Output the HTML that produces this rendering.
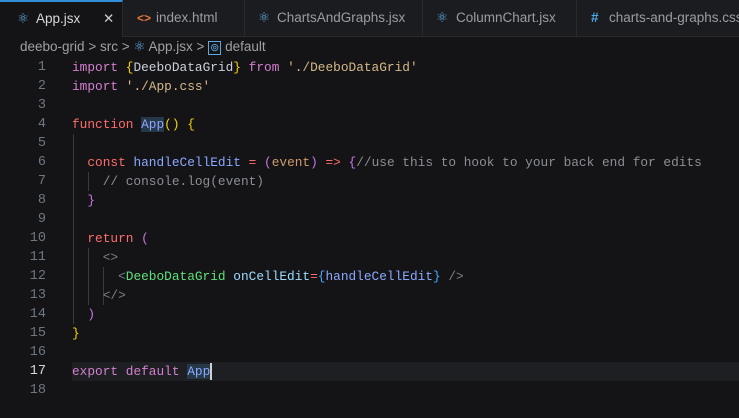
<!DOCTYPE html><html><head><style>
body{margin:0;width:739px;height:418px;background:#141417;overflow:hidden;font-family:"Liberation Sans",sans-serif;position:relative}
.tabs{position:absolute;top:0;left:0;width:739px;height:36px;background:#1b1c1f;border-bottom:1px solid #2a2a2d}
.tab{position:absolute;top:0;height:36px;border-right:1px solid #2a2a2d;color:#9a9da3;font-size:13.5px;line-height:36px;box-sizing:border-box;white-space:nowrap}
.tab.a{background:#141417;color:#d8d8d8;border-top:2px solid #2f8fd8;line-height:33px;height:37px}
.ic{position:absolute;top:0}
.bc{position:absolute;top:36px;left:20px;height:22px;line-height:22px;color:#a0a0a0;font-size:13.5px}
.code{position:absolute;top:58px;left:0;font-family:"Liberation Mono",monospace;font-size:12.8px}
.l{height:19px;line-height:19px;white-space:pre;position:relative}
.n{position:absolute;left:0;width:46px;text-align:right;color:#6e7681;font-size:13.5px}
.t{position:absolute;left:72px;color:#c9d1d9}
.k{color:#d57fd0}.r{color:#ff6b6b}.s{color:#d6b98a}.y{color:#f5d400}.p{color:#c675e8}.b{color:#4aa8ff}.f{color:#8aa8ff}
.c{color:#8b8e94}.g{color:#5fe07a}.v{color:#9cdcfe}.o{color:#cf9a6a}.gt{color:#7b7f86}
.hl{background:#263748}
.guide{position:absolute;width:1px;background:#3a3a3d}
</style></head><body>
<div class="tabs">
<div class="tab a" style="left:0;width:123px"><span class="ic" style="left:17px;color:#5fa8e0">⚛</span><span style="position:absolute;left:36px">App.jsx</span><span style="position:absolute;left:103px;color:#ccc">✕</span></div>
<div class="tab" style="left:123px;width:122px"><span class="ic" style="left:14px;color:#e8743b;font-weight:bold;font-size:12px">&lt;&gt;</span><span style="position:absolute;left:33px">index.html</span></div>
<div class="tab" style="left:245px;width:178px"><span class="ic" style="left:13px;color:#5fa8e0">⚛</span><span style="position:absolute;left:32px">ChartsAndGraphs.jsx</span></div>
<div class="tab" style="left:423px;width:154px"><span class="ic" style="left:13px;color:#5fa8e0">⚛</span><span style="position:absolute;left:33px">ColumnChart.jsx</span></div>
<div class="tab" style="left:577px;width:162px;border-right:none"><span class="ic" style="left:14px;color:#4aa8e8;font-weight:bold">#</span><span style="position:absolute;left:32px">charts-and-graphs.css</span></div>
</div>
<div class="bc">deebo-grid <span>&gt;</span> src <span>&gt;</span> <span style="color:#5fa8e0">⚛</span> App.jsx <span>&gt;</span> <span style="color:#5fa8e0;font-size:11px;border:1px solid #5fa8e0;padding:0 1px">⊚</span> default</div>
<div class="guide" style="left:73px;top:134px;height:190px"></div>
<div class="guide" style="left:88px;top:172px;height:19px"></div>
<div class="guide" style="left:88px;top:248px;height:57px"></div>
<div class="guide" style="left:103px;top:267px;height:38px"></div>
<div style="position:absolute;left:72px;top:362px;width:667px;height:19px;background:#1e1f22"></div>
<div class="code">
<div class="l"><span class="n">1</span><span class="t"><span class="k">import</span> <span class="y">{</span>DeeboDataGrid<span class="y">}</span> <span class="k">from</span> <span class="s">'./DeeboDataGrid'</span></span></div>
<div class="l"><span class="n">2</span><span class="t"><span class="k">import</span> <span class="s">'./App.css'</span></span></div>
<div class="l"><span class="n">3</span></div>
<div class="l"><span class="n">4</span><span class="t"><span class="r">function</span> <span class="f hl">App</span><span class="y">()</span> <span class="y">{</span></span></div>
<div class="l"><span class="n">5</span></div>
<div class="l"><span class="n">6</span><span class="t">  <span class="r">const</span> <span class="f">handleCellEdit</span> <span class="r">=</span> <span class="p">(</span><span class="o">event</span><span class="p">)</span> <span class="r">=&gt;</span> <span class="p">{</span><span class="c">//use this to hook to your back end for edits</span></span></div>
<div class="l"><span class="n">7</span><span class="t">    <span class="c">// console.log(event)</span></span></div>
<div class="l"><span class="n">8</span><span class="t">  <span class="p">}</span></span></div>
<div class="l"><span class="n">9</span></div>
<div class="l"><span class="n">10</span><span class="t">  <span class="r">return</span> <span class="p">(</span></span></div>
<div class="l"><span class="n">11</span><span class="t">    <span class="gt">&lt;&gt;</span></span></div>
<div class="l"><span class="n">12</span><span class="t">      <span class="gt">&lt;</span><span class="g">DeeboDataGrid</span> <span class="v">onCellEdit</span><span class="r">=</span><span class="b">{</span><span class="f">handleCellEdit</span><span class="b">}</span> <span class="gt">/&gt;</span></span></div>
<div class="l"><span class="n">13</span><span class="t">    <span class="gt">&lt;/&gt;</span></span></div>
<div class="l"><span class="n">14</span><span class="t">  <span class="p">)</span></span></div>
<div class="l"><span class="n">15</span><span class="t"><span class="y">}</span></span></div>
<div class="l"><span class="n">16</span></div>
<div class="l"><span class="n" style="color:#d8d8d8">17</span><span class="t"><span class="k">export</span> <span class="k">default</span> <span class="f hl">App</span><span style="display:inline-block;width:2px;height:17px;background:#d0d0d0;vertical-align:middle"></span></span></div>
<div class="l"><span class="n">18</span></div>
</div>
</body></html>
